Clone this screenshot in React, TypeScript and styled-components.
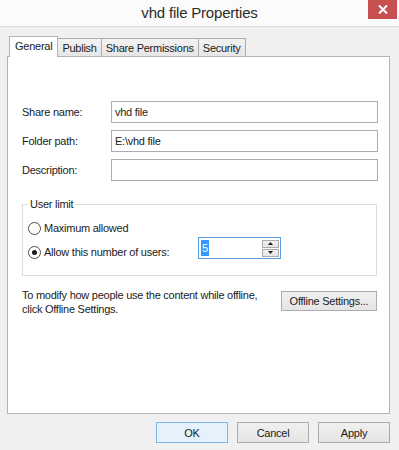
import React from 'react';
import styled, {createGlobalStyle} from 'styled-components';

const GlobalStyle = createGlobalStyle`
  html, body {
    margin: 0;
    padding: 0;
    background: #f0f0f0;
  }
  body {
    font-family: 'Liberation Sans', Arial, sans-serif;
    font-size: 11px;
    letter-spacing: -0.25px;
    color: #1b1b1b;
  }
`;

const Window = styled.div`
  width: 399px;
  height: 450px;
  display: flex;
  flex-direction: column;
  background: #f0f0f0;
  overflow: hidden;
`;

const TitleBar = styled.div`
  height: 26px;
  flex: 0 0 26px;
  border-bottom: 1px solid #dadada;
  background: #fbfbfb;
  display: grid;
  grid-template-columns: 1fr auto 1fr;
  align-items: start;
`;

const Title = styled.div`
  grid-column: 2;
  font-size: 15px;
  letter-spacing: -0.2px;
  line-height: 26px;
  color: #2b2b2b;
`;

const CloseButton = styled.div`
  grid-column: 3;
  justify-self: end;
  margin-right: 2px;
  width: 29px;
  height: 19px;
  background: #c75050;
  display: flex;
  align-items: center;
  justify-content: center;
`;

const Body = styled.div`
  display: flex;
  flex-direction: column;
  padding: 9px 9px 0 7px;
`;

const TabRow = styled.div`
  display: flex;
  align-items: flex-end;
  height: 21px;
  padding-left: 2px;
  position: relative;
  z-index: 1;
`;

const Tab = styled.div<{active?: boolean}>`
  box-sizing: border-box;
  display: flex;
  align-items: center;
  border: 1px solid ${props => (props.active ? '#b4b4b4' : '#acacac')};
  border-bottom: none;
  margin-left: ${props => (props.active ? '0' : '-1px')};
  &:first-child {
    margin-left: 0;
  }
  ${props =>
    props.active
      ? `
    height: 21px;
    padding: 0 5px 2px 5px;
    background: #ffffff;
    position: relative;
    z-index: 2;
  `
      : `
    height: 18px;
    margin-bottom: 1px;
    padding: 0 4px;
    background: linear-gradient(#f2f2f2, #e6e6e6);
  `}
`;

const Panel = styled.div`
  box-sizing: border-box;
  height: 358px;
  margin-top: -1px;
  background: #ffffff;
  border: 1px solid #b4b4b4;
  padding: 44px 11px 0 14px;
  display: flex;
  flex-direction: column;
`;

const FieldGrid = styled.div`
  display: grid;
  grid-template-columns: 89px 1fr;
  grid-auto-rows: 22px;
  row-gap: 7px;
  align-items: center;
`;

const TextBox = styled.div`
  box-sizing: border-box;
  height: 22px;
  border: 1px solid #abadb3;
  padding: 0 3px;
  display: flex;
  align-items: center;
  background: #fff;
`;

const GroupBox = styled.fieldset`
  margin: 16px 1px 0 0;
  border: 1px solid #dcdcdc;
  padding: 0 0 16px 5px;
  min-inline-size: 0;
`;

const GroupLegend = styled.legend`
  padding: 0 2px;
  line-height: 14px;
`;

const RadioRow = styled.div<{first?: boolean}>`
  display: flex;
  align-items: flex-end;
  margin-top: ${props => (props.first ? '10px' : '2px')};
`;

const RadioLabel = styled.label<{width?: number}>`
  display: flex;
  align-items: center;
  gap: 3px;
  line-height: 14px;
  width: ${props => (props.width ? `${props.width}px` : 'auto')};
`;

const RadioCircle = styled.span<{checked?: boolean}>`
  box-sizing: border-box;
  width: 13px;
  height: 13px;
  border-radius: 50%;
  border: 1px solid #4d4d4d;
  background: #ffffff;
  display: flex;
  align-items: center;
  justify-content: center;
  &::after {
    content: '';
    width: 5px;
    height: 5px;
    border-radius: 50%;
    background: ${props => (props.checked ? '#1b1b1b' : 'transparent')};
  }
`;

const SpinBox = styled.div`
  box-sizing: border-box;
  width: 83px;
  height: 22px;
  border: 1px solid #569de5;
  background: #fff;
  display: flex;
  align-items: center;
  justify-content: space-between;
  padding: 0 1px 0 2px;
`;

const Selected = styled.span`
  background: #3399ff;
  color: #ffffff;
  line-height: 16px;
  padding: 0 1px;
`;

const SpinButtons = styled.div`
  display: flex;
  flex-direction: column;
  gap: 1px;
`;

const SpinButton = styled.div`
  box-sizing: border-box;
  width: 17px;
  height: 8px;
  border: 1px solid #acacac;
  background: linear-gradient(#f2f2f2, #e4e4e4);
  display: flex;
  align-items: center;
  justify-content: center;
`;

const OfflineRow = styled.div`
  margin-top: 12px;
  display: flex;
  justify-content: space-between;
  align-items: flex-start;
  padding-right: 1px;
`;

const OfflineText = styled.div`
  line-height: 14px;
`;

const Button = styled.div<{primary?: boolean; width?: number}>`
  box-sizing: border-box;
  width: ${props => props.width || 72}px;
  height: ${props => (props.primary !== undefined ? 21 : 20)}px;
  display: flex;
  align-items: center;
  justify-content: center;
  border: 1px solid ${props => (props.primary ? '#7eb4ea' : '#acacac')};
  background: ${props =>
    props.primary ? '#e5f1fb' : 'linear-gradient(#f0f0f0, #e5e5e5)'};
`;

const OfflineButton = styled(Button)`
  margin-top: 3px;
`;

const ButtonRow = styled.div`
  display: flex;
  justify-content: flex-end;
  gap: 9px;
  margin-top: 8px;
`;

function Triangle({up}: {up?: boolean}) {
  return (
    <svg width="5" height="3" viewBox="0 0 5 3">
      <polygon points={up ? '0,3 5,3 2.5,0' : '0,0 5,0 2.5,3'} fill="#1b1b1b" />
    </svg>
  );
}

export default function App() {
  return (
    <>
      <GlobalStyle />
      <Window>
        <TitleBar>
          <Title>vhd file Properties</Title>
          <CloseButton>
            <svg width="10" height="9" viewBox="0 0 10 9">
              <path d="M1 0.5 L9 8.5 M9 0.5 L1 8.5" stroke="#ffffff" strokeWidth="2" />
            </svg>
          </CloseButton>
        </TitleBar>
        <Body>
          <TabRow>
            <Tab active>General</Tab>
            <Tab>Publish</Tab>
            <Tab>Share Permissions</Tab>
            <Tab>Security</Tab>
          </TabRow>
          <Panel>
            <FieldGrid>
              <span>Share name:</span>
              <TextBox>vhd file</TextBox>
              <span>Folder path:</span>
              <TextBox>E:\vhd file</TextBox>
              <span>Description:</span>
              <TextBox />
            </FieldGrid>
            <GroupBox>
              <GroupLegend>User limit</GroupLegend>
              <RadioRow first>
                <RadioLabel>
                  <RadioCircle />
                  Maximum allowed
                </RadioLabel>
              </RadioRow>
              <RadioRow>
                <RadioLabel width={170}>
                  <RadioCircle checked />
                  Allow this number of users:
                </RadioLabel>
                <SpinBox>
                  <Selected>5</Selected>
                  <SpinButtons>
                    <SpinButton>
                      <Triangle up />
                    </SpinButton>
                    <SpinButton>
                      <Triangle />
                    </SpinButton>
                  </SpinButtons>
                </SpinBox>
              </RadioRow>
            </GroupBox>
            <OfflineRow>
              <OfflineText>
                To modify how people use the content while offline,
                <br />
                click Offline Settings.
              </OfflineText>
              <OfflineButton width={96}>Offline Settings...</OfflineButton>
            </OfflineRow>
          </Panel>
          <ButtonRow>
            <Button primary>OK</Button>
            <Button primary={false}>Cancel</Button>
            <Button primary={false}>Apply</Button>
          </ButtonRow>
        </Body>
      </Window>
    </>
  );
}
